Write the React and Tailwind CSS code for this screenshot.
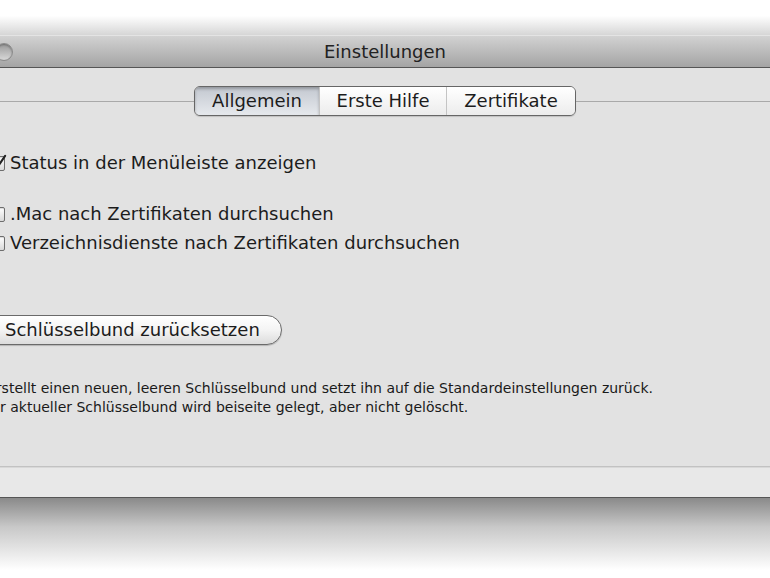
import React from "react";

function Checkbox({ checked }) {
  return (
    <span className="relative w-[15px] h-[15px] shrink-0 rounded-[2px] border border-[#6e6e6e] bg-linear-to-b from-white to-[#d9d9d9] shadow-[inset_0_1px_1px_rgba(0,0,0,0.15)]">
      {checked && (
        <svg viewBox="0 0 16 16" className="absolute left-[1px] top-[-3px] w-[15px] h-[16px]">
          <path d="M3 8.5 L6.5 12.5 L14 1.5" fill="none" stroke="#222" strokeWidth="2.2" strokeLinecap="round" strokeLinejoin="round" />
        </svg>
      )}
    </span>
  );
}

function CheckRow({ label, checked, className }) {
  return (
    <div className={`flex items-center gap-[5px] h-[22px] ${className}`}>
      <Checkbox checked={checked} />
      <span className="text-[18px] leading-[22px] text-[#1c1c1c]">{label}</span>
    </div>
  );
}

const tabs = [
  { label: "Allgemein", w: "w-[124px]", active: true },
  { label: "Erste Hilfe", w: "w-[127px]" },
  { label: "Zertifikate", w: "w-[129px]" },
];

export default function App() {
  return (
    <div className="w-[770px] h-[578px] overflow-hidden bg-white font-['Lucida_Grande','DejaVu_Sans',sans-serif] text-[#1c1c1c]">
      <div className="h-[35px] bg-linear-to-b from-white from-45% to-[#d6d6d6]" />

      <div className="ml-[-30px] w-[830px]">
        {/* title bar */}
        <div className="relative h-[33px] border-t border-[#e4e4e4] border-b border-b-[#555] bg-linear-to-b from-[#d2d2d2] to-[#a4a4a4] flex items-center justify-center">
          <span className="absolute left-[25px] top-[7px] w-[18px] h-[18px] rounded-full border border-[#8a8a8a] bg-linear-to-b from-[#9a9a9a] to-[#d8d8d8] shadow-[inset_0_1px_2px_rgba(0,0,0,0.3)]" />
          <span className="text-[18px] leading-none text-[#222]">Einstellungen</span>
        </div>

        {/* content */}
        <div className="h-[398px] bg-[#e2e2e2] flex flex-col">
          <div className="mt-[18px] flex items-center">
            <div className="flex-1 h-px bg-[#a9a9a9]" />
            <div className="flex h-[30px] rounded-[6px] border border-[#666] overflow-hidden shadow-[0_1px_1px_rgba(0,0,0,0.15)]">
              {tabs.map((t, i) => (
                <div
                  key={t.label}
                  className={`${t.w} flex items-center justify-center text-[18px] leading-none ${
                    i > 0 ? "border-l border-[#c4c4c4]" : ""
                  } ${
                    t.active
                      ? "bg-linear-to-b from-[#c3c8d0] to-[#e6e9ed] shadow-[inset_0_2px_3px_rgba(0,0,0,0.25)]"
                      : "bg-linear-to-b from-white to-[#ececec]"
                  }`}
                >
                  {t.label}
                </div>
              ))}
            </div>
            <div className="flex-1 h-px bg-[#a9a9a9]" />
          </div>

          <CheckRow className="mt-[36px] ml-[20px]" checked label="Status in der Menüleiste anzeigen" />
          <CheckRow className="mt-[29px] ml-[20px]" label=".Mac nach Zertifikaten durchsuchen" />
          <CheckRow className="mt-[7px] ml-[20px]" label="Verzeichnisdienste nach Zertifikaten durchsuchen" />

          <div className="mt-[61px] ml-[13px] self-start h-[30px] px-[21px] flex items-center rounded-full border border-[#6a6a6a] bg-linear-to-b from-white via-[#f4f4f4] to-[#dcdcdc] shadow-[0_1px_1px_rgba(0,0,0,0.2)] text-[18px] leading-none">
            Schlüsselbund zurücksetzen
          </div>

          <div className="mt-[34px] ml-[17px] text-[14px] leading-[19px] text-[#1a1a1a]">
            <p>Erstellt einen neuen, leeren Schlüsselbund und setzt ihn auf die Standardeinstellungen zurück.</p>
            <p>Ihr aktueller Schlüsselbund wird beiseite gelegt, aber nicht gelöscht.</p>
          </div>
        </div>

        {/* footer */}
        <div className="h-[32px] border-t border-[#c2c2c2] shadow-[inset_0_1px_0_#d8d8d8] bg-[#e8e8e8] border-b border-b-[#555]" />
      </div>

      <div className="h-[72px] bg-linear-to-b from-[#8a8a8a] via-[#c8c8c8] via-40% to-white" />
    </div>
  );
}
